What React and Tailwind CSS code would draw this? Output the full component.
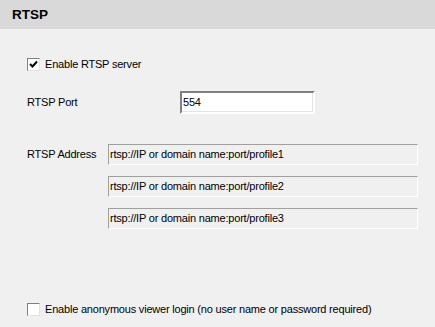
export default function App() {
  const addresses = [
    "rtsp://IP or domain name:port/profile1",
    "rtsp://IP or domain name:port/profile2",
    "rtsp://IP or domain name:port/profile3",
  ];

  return (
    <div className="w-[435px] h-[327px] bg-[#f0f0f0] text-black overflow-hidden font-['Liberation_Sans',Arial,sans-serif] text-[11px] tracking-[-0.2px] leading-none">
      {/* header */}
      <div className="h-[29px] bg-[#d9d9d9] flex items-center pl-[12px]">
        <span className="text-[13.5px] font-bold tracking-normal">RTSP</span>
      </div>

      <div className="pl-[27px]">
        {/* enable server */}
        <label className="mt-[29px] flex items-center gap-[5px]">
          <span className="w-[13px] h-[13px] bg-white border border-t-[#808080] border-l-[#808080] border-b-[#e3e3e3] border-r-[#e3e3e3] flex items-center justify-center">
            <svg width="9" height="9" viewBox="0 0 9 9">
              <path d="M1 4 L3.5 6.5 L8 1.5" stroke="#000" strokeWidth="2" fill="none" />
            </svg>
          </span>
          <span>Enable RTSP server</span>
        </label>

        {/* port */}
        <div className="mt-[20px] flex items-center">
          <span className="w-[153px]">RTSP Port</span>
          <div className="w-[135px] h-[23px] bg-white border-2 border-t-[#808080] border-l-[#808080] border-b-[#ffffff] border-r-[#ffffff] shadow-[inset_-1px_-1px_0_#e3e3e3] flex items-center pl-[1px]">
            554
          </div>
        </div>

        {/* address */}
        <div className="mt-[30px] flex">
          <span className="w-[81px] pt-[5px]">RTSP Address</span>
          <div className="flex flex-col gap-[11px]">
            {addresses.map((a) => (
              <div
                key={a}
                className="w-[310px] h-[21px] border border-t-[#a0a0a0] border-l-[#a0a0a0] border-b-white border-r-white flex items-center pl-[1px]"
              >
                {a}
              </div>
            ))}
          </div>
        </div>

        {/* anonymous */}
        <label className="mt-[74px] flex items-center gap-[5px]">
          <span className="w-[13px] h-[13px] bg-white border border-t-[#808080] border-l-[#808080] border-b-[#e3e3e3] border-r-[#e3e3e3]" />
          <span>Enable anonymous viewer login (no user name or password required)</span>
        </label>
      </div>
    </div>
  );
}
